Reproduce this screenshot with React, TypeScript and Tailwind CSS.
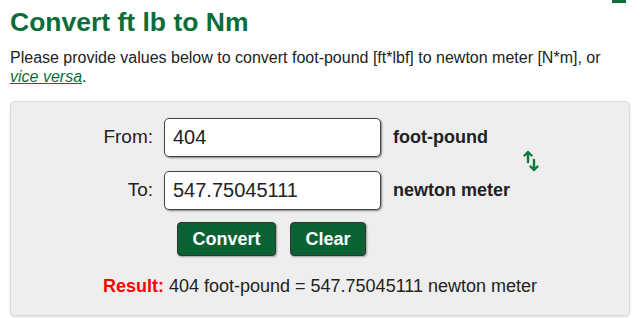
export default function App() {
  return (
    <div className="relative w-[640px] h-[318px] bg-white overflow-hidden font-['Liberation_Sans',Arial,sans-serif] text-[#222]">
      <div className="absolute top-0 left-[612px] w-[14px] h-[3px] bg-[#0b6d38]" />
      <div className="px-[10px] pt-[6px]">
        <h1 className="text-[26.5px] leading-[32px] font-bold text-[#0b6d38]">Convert ft lb to Nm</h1>
        <p className="mt-[10px] text-[16px] leading-[19px]">
          Please provide values below to convert foot-pound [ft*lbf] to newton meter [N*m], or{" "}
          <a href="#" className="italic underline text-[#0b6d38]">vice versa</a>.
        </p>

        <div className="mt-[15px] h-[215px] rounded-[5px] border border-[#dcdcdc] bg-[#eeeeee] shadow-[0_1px_2px_rgba(0,0,0,0.15)] pt-[16px]">
          <div className="flex items-center">
            <div className="flex flex-col gap-[14px]">
              <div className="flex items-center">
                <span className="w-[142px] text-right text-[19px]">From:</span>
                <input
                  defaultValue="404"
                  className="ml-[11px] w-[217px] h-[39px] rounded-[5px] border border-[#444] bg-white px-[8px] text-[20px] text-[#222] shadow-[1px_1px_2px_rgba(0,0,0,0.45)] outline-none"
                />
                <span className="ml-[12px] text-[18px] font-bold">foot-pound</span>
              </div>
              <div className="flex items-center">
                <span className="w-[142px] text-right text-[19px]">To:</span>
                <input
                  defaultValue="547.75045111"
                  className="ml-[11px] w-[217px] h-[39px] rounded-[5px] border border-[#444] bg-white px-[8px] text-[20px] text-[#222] shadow-[1px_1px_2px_rgba(0,0,0,0.45)] outline-none"
                />
                <span className="ml-[12px] text-[18px] font-bold">newton meter</span>
              </div>
            </div>
            <svg className="ml-[13px] mt-[-6px]" width="16" height="22" viewBox="0 0 16 22" fill="none" stroke="#0b7a3c" strokeWidth="2.4" strokeLinecap="round" strokeLinejoin="round">
              <path d="M5 12V2M1.5 5.5L5 2l3.5 3.5" />
              <path d="M11 10v10M7.5 16.5L11 20l3.5-3.5" />
            </svg>
          </div>

          <div className="mt-[12px] ml-[166px] flex gap-[14px]">
            <button className="w-[99px] h-[34px] rounded-[4px] border border-[#333] bg-[#0a6234] text-white text-[18px] font-bold shadow-[1px_1px_2px_rgba(0,0,0,0.35)]">Convert</button>
            <button className="w-[76px] h-[34px] rounded-[4px] border border-[#333] bg-[#0a6234] text-white text-[18px] font-bold shadow-[1px_1px_2px_rgba(0,0,0,0.35)]">Clear</button>
          </div>

          <p className="mt-[17px] text-center text-[18px]">
            <span className="font-bold text-[#ff0000]">Result:</span> 404 foot-pound = 547.75045111 newton meter
          </p>
        </div>
      </div>
    </div>
  );
}
